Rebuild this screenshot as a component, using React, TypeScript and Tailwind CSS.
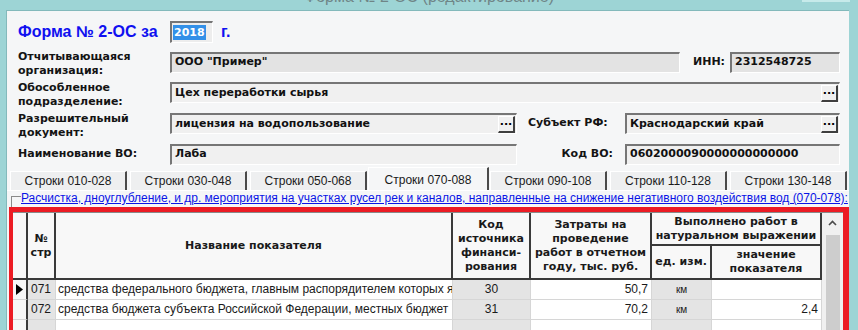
import React from "react";

const bold = "font-['DejaVu_Sans',sans-serif] font-bold text-[11px]";
const reg = "font-['Liberation_Sans',Arial,sans-serif] text-[12px]";

const Dots = () => (
   <div className="flex h-[17px] w-[17px] shrink-0 items-start justify-center border-t border-l border-t-white border-l-white border-r-2 border-b-2 border-r-[#3f3f3f] border-b-[#3f3f3f] bg-[#f0f0f0] font-['DejaVu_Sans',sans-serif] text-[11px] font-bold leading-[9px] text-black">
      ...
   </div>
);

type FieldProps = { width: string; value: string; gray?: boolean; dots?: boolean };

const Field = ({ width, value, gray, dots }: FieldProps) => (
   <div
      className={`flex h-[21px] shrink-0 items-center border-t-2 border-l-2 border-t-[#767676] border-l-[#767676] border-b border-r border-b-white border-r-white pl-[3px] pr-[1px] ${gray ? "bg-[#e3e3e3]" : "bg-[#f0f0f0]"} ${width}`}
   >
      <span className={`${bold} flex-1 truncate text-[#111]`}>{value}</span>
      {dots && <Dots />}
   </div>
);

const Label = ({ children }: { children: React.ReactNode }) => (
   <div className={`${bold} w-[152px] shrink-0 pt-[4px] leading-[14px] text-[#141414]`}>{children}</div>
);

const tabs = [
   "Строки 010-028",
   "Строки 030-048",
   "Строки 050-068",
   "Строки 070-088",
   "Строки 090-108",
   "Строки 110-128",
   "Строки 130-148",
];

const rows = [
   {
      n: "071",
      name: "средства федерального бюджета, главным распорядителем которых я",
      code: "30",
      cost: "50,7",
      unit: "км",
      val: "",
      sel: true,
   },
   {
      n: "072",
      name: "средства бюджета субъекта Российской Федерации, местных бюджет",
      code: "31",
      cost: "70,2",
      unit: "км",
      val: "2,4",
      sel: false,
   },
   { n: "", name: "", code: "", cost: "", unit: "", val: "", sel: false },
];

const hd = `${bold} flex items-center justify-center text-center border-r-2 border-b-2 border-[#3a3a3a] bg-[#f8f8f8] leading-[14px] text-[#1a1a1a]`;
const cell = "h-full border-r border-b border-[#d6d6d6] overflow-hidden whitespace-nowrap leading-[19px] text-[#1a1a1a]";

export default function App() {
   return (
      <div className="flex h-[330px] w-[858px] flex-col overflow-hidden bg-[#9dd4d5]">
         <div className="relative h-[10px] shrink-0 overflow-hidden">
            <div className="mt-[-11px] text-center font-['Liberation_Sans',Arial,sans-serif] text-[16px] leading-[16px] text-[#6f8587]">
               Форма № 2-ОС (редактирование)
            </div>
            <div className="absolute right-[8px] top-0 h-[2px] w-[48px] bg-[#c6eaea]" />
         </div>

         <div className="ml-[6px] mr-[9px] flex flex-1 flex-col border-t border-l border-[#83b9bb] bg-[#f5f6f7]">
            <div className="flex flex-col pl-[11px] pt-[6px]">
               <div className="flex h-[30px] items-center">
                  <div className="w-[152px] shrink-0 font-['Liberation_Sans',Arial,sans-serif] text-[16px] font-bold text-[#1010f0]">
                     Форма № 2-ОС за
                  </div>
                  <div className="flex h-[22px] w-[43px] items-center border-t-2 border-l-2 border-t-[#767676] border-l-[#767676] border-b border-r border-b-white border-r-white bg-[#ededed] pl-[1px]">
                     <span className={`${bold} bg-[#3390e8] px-[1px] leading-[15px] text-white`}>2018</span>
                  </div>
                  <div className="ml-[8px] font-['Liberation_Sans',Arial,sans-serif] text-[16px] font-bold text-[#1010f0]">г.</div>
               </div>

               <div className="flex h-[30px] items-center">
                  <Label>
                     Отчитывающаяся
                     <br />
                     организация:
                  </Label>
                  <Field width="w-[510px]" value={'ООО "Пример"'} gray />
                  <div className={`${bold} w-[50px] shrink-0 pr-[5px] text-right text-[#141414]`}>ИНН:</div>
                  <Field width="w-[110px]" value="2312548725" gray />
               </div>

               <div className="flex h-[31px] items-center">
                  <Label>
                     Обособленное
                     <br />
                     подразделение:
                  </Label>
                  <Field width="w-[670px]" value="Цех переработки сырья" dots />
               </div>

               <div className="flex h-[31px] items-center">
                  <Label>
                     Разрешительный
                     <br />
                     документ:
                  </Label>
                  <Field width="w-[347px]" value="лицензия на водопользование" dots />
                  <div className={`${bold} w-[108px] shrink-0 pl-[11px] text-[#141414]`}>Субъект РФ:</div>
                  <Field width="w-[215px]" value="Краснодарский край" dots />
               </div>

               <div className="flex h-[30px] items-center">
                  <div className={`${bold} w-[152px] shrink-0 text-[#141414]`}>Наименование ВО:</div>
                  <Field width="w-[347px]" value="Лаба" />
                  <div className={`${bold} w-[108px] shrink-0 pr-[12px] text-right text-[#141414]`}>Код ВО:</div>
                  <Field width="w-[215px]" value="0602000090000000000000" />
               </div>
            </div>

            <div className="flex h-[22px] items-end gap-[3px] border-b border-white pl-[3px]">
               {tabs.map((t, i) =>
                  i === 3 ? (
                     <div
                        key={t}
                        className={`${reg} -mx-[2px] flex h-[23px] w-[121px] items-start justify-center border-t border-l border-white border-r-2 border-r-[#4a4a4a] bg-[#f5f6f7] pt-[3px] text-[#1a1a1a]`}
                     >
                        {t}
                     </div>
                  ) : (
                     <div
                        key={t}
                        className={`${reg} flex h-[19px] w-[117px] items-center justify-center border-t border-l border-white border-r-2 border-r-[#4a4a4a] bg-[#eeeff0] text-[#1a1a1a]`}
                     >
                        {t}
                     </div>
                  )
               )}
            </div>

            <div className="flex h-[16px] items-start pl-[4px]">
               <div className="mt-[5px] h-[11px] w-[10px] shrink-0 border-t border-l border-[#8a8a8a]" />
               <div className={`${reg} whitespace-nowrap leading-[15px] tracking-[-0.01px] text-[#0a14e6] underline`}>
                  Расчистка, дноуглубление, и др. мероприятия на участках русел рек и каналов, направленные на снижение негативного воздействия вод (070-078):
               </div>
            </div>

            <div className="ml-[2px] flex w-[840px] flex-1 border-t-[5px] border-l-[4px] border-r-[6px] border-[#ec1c24] bg-white">
               <div className="flex w-[809px] flex-col">
                  <div className="flex h-[68px] border-t border-[#8a8a8a]">
                     <div className={`${hd} w-[15px]`} />
                     <div className={`${hd} w-[28px]`}>
                        №
                        <br />
                        стр
                     </div>
                     <div className={`${hd} w-[397px]`}>Название показателя</div>
                     <div className={`${hd} w-[78px]`}>
                        Код
                        <br />
                        источника
                        <br />
                        финанси-
                        <br />
                        рования
                     </div>
                     <div className={`${hd} w-[121px]`}>
                        Затраты на
                        <br />
                        проведение
                        <br />
                        работ в отчетном
                        <br />
                        году, тыс. руб.
                     </div>
                     <div className="flex w-[170px] flex-col">
                        <div className={`${hd} h-[33px]`}>
                           Выполнено работ в
                           <br />
                           натуральном выражении
                        </div>
                        <div className="flex flex-1">
                           <div className={`${hd} w-[60px]`}>ед. изм.</div>
                           <div className={`${hd} w-[110px]`}>
                              значение
                              <br />
                              показателя
                           </div>
                        </div>
                     </div>
                  </div>

                  {rows.map((r, i) => (
                     <div key={i} className={`${reg} flex h-[20px] shrink-0`}>
                        <div className="flex h-full w-[15px] items-center justify-center border-r-2 border-b border-r-[#3a3a3a] border-b-[#d6d6d6] bg-[#f7f7f7]">
                           {r.sel && (
                              <svg width="7" height="11" viewBox="0 0 7 11">
                                 <polygon points="0,0 7,5.5 0,11" fill="#000" />
                              </svg>
                           )}
                        </div>
                        <div className={`${cell} w-[28px] bg-[#e4e4e4] pl-[3px]`}>{r.n}</div>
                        <div className={`${cell} w-[397px] bg-white pl-[2px]`}>{r.name}</div>
                        <div className={`${cell} w-[78px] bg-[#e4e4e4] text-center`}>{r.code}</div>
                        <div className={`${cell} w-[121px] bg-white pr-[3px] text-right`}>{r.cost}</div>
                        <div className={`${cell} w-[60px] bg-[#e4e4e4] text-center text-[10px]`}>{r.unit}</div>
                        <div className={`${cell} w-[110px] bg-white pr-[3px] text-right`}>{r.val}</div>
                     </div>
                  ))}
               </div>

               <div className="flex w-[21px] flex-col border-t border-[#8a8a8a] bg-[#f0f0f0]">
                  <div className="flex h-[20px] items-center justify-center">
                     <svg width="9" height="6" viewBox="0 0 9 6">
                        <path d="M1 5 L4.5 1.5 L8 5" fill="none" stroke="#4a4a4a" strokeWidth="1.6" />
                     </svg>
                  </div>
                  <div className="ml-[4px] mt-[2px] w-[14px] flex-1 bg-[#cdcdcd]" />
               </div>
            </div>
         </div>
      </div>
   );
}
